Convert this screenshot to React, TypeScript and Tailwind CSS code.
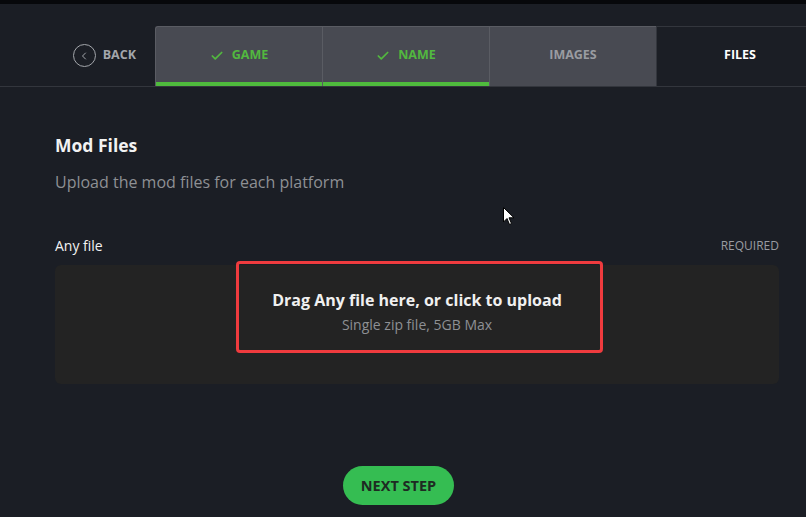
import { Check, ChevronLeft } from 'lucide-react';

const steps = [
  { label: 'GAME', done: true },
  { label: 'NAME', done: true },
  { label: 'IMAGES', done: false },
];

export default function App() {
  return (
    <div className="w-[806px] h-[517px] overflow-hidden bg-[#1b1e25] font-['Open_Sans','Noto_Sans',sans-serif] relative">
      <div className="h-[4px] bg-[#07080b]" />

      {/* Step bar */}
      <div className="mt-[22px] flex h-[61px] border-b border-[#33363d]">
        <button className="w-[155px] shrink-0 flex items-center justify-end pr-[19px] gap-[7px] text-[#a3a6ab] pb-[1px]">
          <span className="w-[23px] h-[23px] rounded-full border-[1.5px] border-[#a3a6ab] flex items-center justify-center">
            <ChevronLeft size={12} strokeWidth={2} />
          </span>
          <span className="text-[12.5px] font-bold">BACK</span>
        </button>
        {steps.map((s, i) => (
          <div
            key={s.label}
            className={`w-[167px] shrink-0 relative flex items-center justify-center gap-[8px] pb-[2px] bg-[#484a52] border-t border-[#5a5c63] ${i === 0 ? 'border-l rounded-tl-[3px]' : 'border-l'} ${s.done ? 'text-[#52b83f]' : 'text-[#9a9ca1]'}`}
          >
            {s.done && <Check size={14} strokeWidth={3} />}
            <span className="text-[12.5px] font-bold">{s.label}</span>
            {s.done && <div className="absolute left-0 right-0 bottom-0 h-[4px] bg-[#4fbb3d]" />}
          </div>
        ))}
        <div className="w-[167px] shrink-0 flex items-center justify-center pb-[2px] border-t border-l border-[#33363d] text-white">
          <span className="text-[12.5px] font-bold">FILES</span>
        </div>
      </div>

      {/* Content */}
      <div className="px-[55px] pt-[47px]">
        <h2 className="text-[17.5px] font-bold text-[#f2f2f2] leading-[22px]">Mod Files</h2>
        <p className="mt-[15px] text-[16px] text-[#8e9094] leading-[22px]">Upload the mod files for each platform</p>

        <div className="mt-[44px] flex items-end justify-between w-[724px]">
          <span className="text-[14px] text-[#f2f2f2] leading-[18px]">Any file</span>
          <span className="text-[12px] text-[#9a9ca1] leading-[18px]">REQUIRED</span>
        </div>

        <div className="mt-[10px] w-[724px] h-[119px] rounded-[6px] bg-[#232323] flex flex-col items-center pt-[24px] relative">
          <span className="text-[16px] font-bold text-[#f0f0f0] leading-[22px]">Drag Any file here, or click to upload</span>
          <span className="mt-[5px] text-[14px] text-[#8e9094] leading-[18px]">Single zip file, 5GB Max</span>
          <div className="absolute left-[181px] top-[-4px] w-[367px] h-[92px] border-[3px] border-[#ef3b3e] rounded-[4px]" />
        </div>

        <div className="mt-[82px] pl-[288px]">
          <button className="h-[39px] w-[111px] rounded-full bg-[#35bd52] text-[#1e2a22] text-[14.5px] font-bold">
            NEXT STEP
          </button>
        </div>
      </div>

      {/* cursor */}
      <svg className="absolute left-[503px] top-[207px]" width="12" height="19" viewBox="0 0 12 19">
        <path d="M0.5 0.5 L0.5 15 L4 11.5 L6.5 17.5 L8.5 16.5 L6 10.8 L11 10.8 Z" fill="#fff" stroke="#000" strokeWidth="1" />
      </svg>
    </div>
  );
}
